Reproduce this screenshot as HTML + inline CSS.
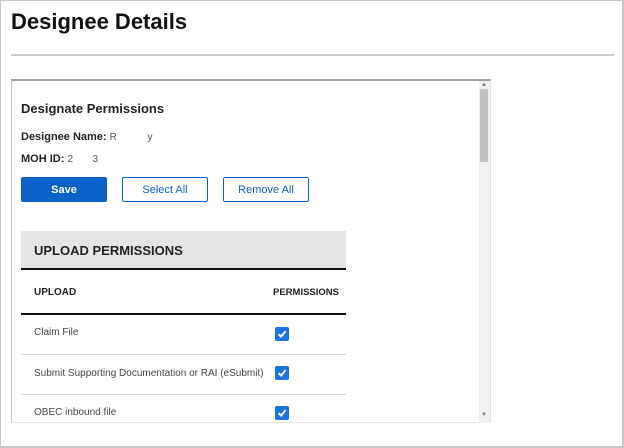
<!DOCTYPE html>
<html><head><style>
*{margin:0;padding:0;box-sizing:border-box}
body{width:624px;height:448px;overflow:hidden;background:#fff;font-family:"Liberation Sans",sans-serif;position:relative;color:#222}
.frame{position:absolute;left:0;top:0;width:624px;height:448px;border:1px solid #c8c8c8;border-right:2px solid #c8c8c8;border-bottom:2px solid #c8c8c8}
.a{position:absolute;white-space:nowrap}
h1{position:absolute;left:11px;top:9px;font-size:22px;font-weight:bold;color:#111}
.hr{position:absolute;left:11px;top:54px;width:603px;height:2px;background:#ccc}
.box{position:absolute;left:11px;top:79px;width:480px;height:344px;border-top:2px solid #a0a0a0;border-left:1px solid #c0c0c0;border-right:1px solid #e0e0e0;border-bottom:1px solid #e8e8e8;overflow:hidden}
.sb{position:absolute;left:479px;top:81px;width:11px;height:342px;background:#f0f0f0}
.thumb{position:absolute;left:480px;top:89px;width:8px;height:73px;background:#c1c1c1}
.btn{position:absolute;top:177px;width:86px;height:25px;border:1px solid #0a62c9;border-radius:2px;color:#0a62c9;font-size:11px;text-align:center;line-height:25px}
.cb{position:absolute;left:275px;width:14px;height:14px;background:#1a73e8;border-radius:2px}
.cb svg{position:absolute;left:1px;top:1px}
.row{font-size:10px;color:#444}
.ln{position:absolute;left:21px;width:325px}
</style></head><body>
<div class="frame"></div>
<h1>Designee Details</h1>
<div class="hr"></div>
<div class="box"></div>
<div class="sb"></div><div class="thumb"></div>
<div class="a" style="left:481px;top:82px;font-size:6px;color:#777">▲</div>
<div class="a" style="left:481px;top:412px;font-size:6px;color:#777">▼</div>
<div class="a" style="left:21px;top:101px;font-size:13px;font-weight:bold">Designate Permissions</div>
<div class="a" style="left:21px;top:131px;font-size:11px;font-weight:bold">Designee Name: <span style="font-weight:normal;font-size:10px;color:#555">R&nbsp;&nbsp;&nbsp;&nbsp;&nbsp;&nbsp;&nbsp;&nbsp;&nbsp;&nbsp;&nbsp;y</span></div>
<div class="a" style="left:21px;top:153px;font-size:11px;font-weight:bold">MOH ID: <span style="font-weight:normal;font-size:10px;color:#555">2&nbsp;&nbsp;&nbsp;&nbsp;&nbsp;&nbsp;&nbsp;3</span></div>
<div class="btn" style="left:21px;background:#0a62c9;color:#fff;font-weight:bold">Save</div>
<div class="btn" style="left:122px">Select All</div>
<div class="btn" style="left:223px">Remove All</div>
<div class="a" style="left:21px;top:231px;width:325px;height:37px;background:#e5e5e5"></div>
<div class="a" style="left:34px;top:243px;font-size:13px;font-weight:bold;color:#222">UPLOAD PERMISSIONS</div>
<div class="ln" style="top:268px;height:2px;background:#111"></div>
<div class="a" style="left:34px;top:287px;font-size:10px;font-weight:bold">UPLOAD</div>
<div class="a" style="left:273px;top:287px;font-size:9.5px;font-weight:bold">PERMISSIONS</div>
<div class="ln" style="top:313px;height:2px;background:#111"></div>
<div class="a row" style="left:34px;top:327px">Claim File</div>
<div class="cb" style="top:327px"><svg width="12" height="12" viewBox="0 0 12 12"><path d="M2.5 6.2 L5 8.6 L9.6 3.2" stroke="#fff" stroke-width="2" fill="none"/></svg></div>
<div class="ln" style="top:354px;height:1px;background:#d8d8d8"></div>
<div class="a row" style="left:34px;top:368px">Submit Supporting Documentation or RAI (eSubmit)</div>
<div class="cb" style="top:366px"><svg width="12" height="12" viewBox="0 0 12 12"><path d="M2.5 6.2 L5 8.6 L9.6 3.2" stroke="#fff" stroke-width="2" fill="none"/></svg></div>
<div class="ln" style="top:394px;height:1px;background:#d8d8d8"></div>
<div class="a row" style="left:34px;top:407px">OBEC inbound file</div>
<div class="cb" style="top:406px"><svg width="12" height="12" viewBox="0 0 12 12"><path d="M2.5 6.2 L5 8.6 L9.6 3.2" stroke="#fff" stroke-width="2" fill="none"/></svg></div>
</body></html>
